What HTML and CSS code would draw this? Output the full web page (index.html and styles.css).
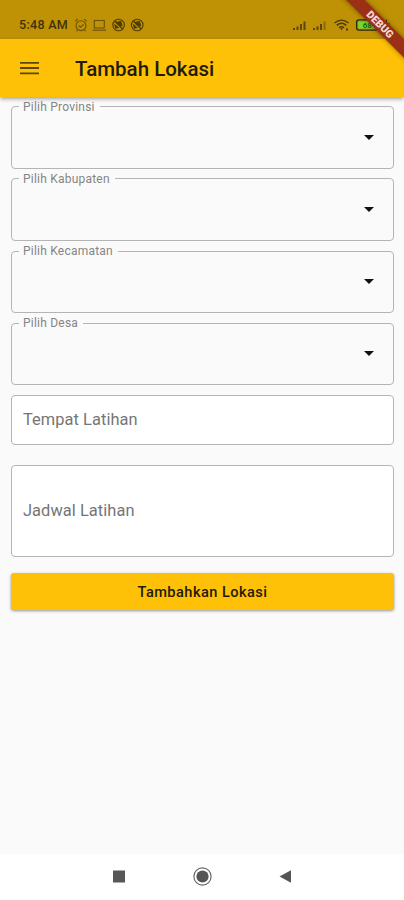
FILE: index.html
```
<!DOCTYPE html>
<html lang="id">
<head>
<meta charset="utf-8">
<title>Tambah Lokasi</title>
<link rel="stylesheet" href="styles.css">
</head>
<body>
<div class="screen">
  <div class="status">
    <span class="time">5:48 AM</span>
    <svg class="left-icons" width="72" height="14" viewBox="0 0 72 14" fill="none" stroke="#6a5205" stroke-width="1.1">
      <circle cx="8" cy="7.7" r="4.9"/><path d="M2.2 3.4L4.8 1.2M13.8 3.4L11.2 1.2M5.8 7.5L7.6 9.3L10.5 6.4M4.5 12L3.4 13M11.5 12L12.6 13"/>
      <rect x="21.3" y="2.5" width="10" height="7.5"/><path d="M19.5 12.2H33.1"/>
      <g id="mute" stroke="#503d05"><circle cx="45.6" cy="7" r="5.8"/><path d="M41.6 3L49.6 11" stroke-width="1.3"/><path d="M43.4 4.2L47.8 3.6L49 7.6L47 7.4ZM42 7L45 9.6L42.6 10Z" fill="#503d05"/></g>
      <use href="#mute" x="18.6"/>
    </svg>
    <svg class="right-icons" width="100" height="14" viewBox="0 0 100 14">
      <g fill="#5c4705"><path d="M1 10h2v2H1zM4.5 8.5h2V12h-2zM8 6h2v6H8zM11.5 3.5h2V12h-2z"/><path d="M21 10h2v2h-2zM24.5 8.5h2V12h-2zM28 6h2v6h-2z"/><path d="M31.5 3.5h2V12h-2z" opacity=".5"/></g>
      <g fill="none" stroke="#4c3a05" stroke-width="1.4"><path d="M42.5 5Q49.5 -.8 56.5 5M44.7 7.4Q49.5 3.2 54.3 7.4M47 9.8Q49.5 7.6 52 9.8"/></g>
      <path d="M48 10.2h3l-1.5 2zM54 10.5h2v2h-2z" fill="#4c3a05"/>
      <rect x="64.6" y="1.8" width="22" height="10.4" rx="2.4" fill="#b98d05" stroke="#2f2c08" stroke-width="1.3"/>
      <rect x="66.3" y="3.5" width="18.6" height="7" rx="1" fill="#6fdc35"/>
      <text x="75.3" y="9.8" class="level">68</text>
      <path d="M95 1L91 7.5H94L92.5 13L98 5.6H95Z" fill="#3c3008"/>
    </svg>
  </div>
  <header class="appbar">
    <svg class="menu" width="20" height="14" viewBox="0 0 20 14" stroke="#5c4805" stroke-width="1.8"><path d="M0 1.8H19M0 7H19M0 12.3H19"/></svg>
    <h1>Tambah Lokasi</h1>
  </header>
  <main class="form">
    <fieldset class="select"><legend>Pilih Provinsi</legend><i class="caret"></i></fieldset>
    <fieldset class="select"><legend>Pilih Kabupaten</legend><i class="caret"></i></fieldset>
    <fieldset class="select"><legend>Pilih Kecamatan</legend><i class="caret"></i></fieldset>
    <fieldset class="select"><legend>Pilih Desa</legend><i class="caret"></i></fieldset>
    <div class="field place">Tempat Latihan</div>
    <div class="field schedule">Jadwal Latihan</div>
    <div class="button">Tambahkan Lokasi</div>
  </main>
  <nav class="navbar">
    <svg width="20" height="20" viewBox="0 0 20 20"><path d="M4 3.5h12v12H4z" fill="#575757"/></svg>
    <svg width="20" height="20" viewBox="0 0 20 20"><circle cx="10.5" cy="9.5" r="8.6" fill="none" stroke="#686868" stroke-width="1.2"/><circle cx="10.5" cy="9.5" r="6.1" fill="#555"/></svg>
    <svg width="20" height="20" viewBox="0 0 20 20"><path d="M3.5 9.5L15 3.3V15.7z" fill="#555"/></svg>
  </nav>
  <div class="banner">DEBUG</div>
</div>
</body>
</html>
```
FILE: styles.css
```
* { box-sizing: border-box; }
body { margin: 0; font-family: Roboto, "Liberation Sans", sans-serif; }
.screen {
  position: relative;
  display: flex;
  flex-direction: column;
  width: 404px;
  height: 900px;
  overflow: hidden;
  background: #fafafa;
}
.status {
  display: flex;
  align-items: center;
  height: 39px;
  padding: 10px 12px 0 19px;
  background: #bf9105;
}
.time { width: 54px; font-size: 12.5px; font-weight: 500; letter-spacing: 0.3px; color: #3f3105; white-space: nowrap; }
.left-icons { flex: none; }
.right-icons { flex: none; margin-left: auto; }
.level { font-size: 8px; font-weight: 700; text-anchor: middle; fill: #256315; }
.appbar {
  display: flex;
  align-items: center;
  flex: none;
  height: 58px;
  padding-left: 20px;
  background: #ffc107;
  box-shadow: 0 2px 4px rgba(0, 0, 0, 0.35);
}
.menu { margin-right: 35px; }
h1 { margin: 0; padding-top: 1px; font-size: 20.5px; font-weight: 500; letter-spacing: 0; color: #211b06; }
.form { display: flex; flex-direction: column; padding: 2.5px 10px 0 11px; }
.select {
  display: flex;
  justify-content: flex-end;
  height: 69px;
  margin: 0 0 3.3px;
  padding: 0 19px 0 7px;
  border: 1px solid #b5b5b5;
  border-radius: 4px;
  min-width: 0;
}
legend { height: 14px; padding: 0 5px 0 4px; font-size: 12px; line-height: 14px; letter-spacing: 0.22px; color: #858585; }
.caret { margin-top: 21px; border: 5px solid transparent; border-top-color: #111; border-bottom: 0; }
.field {
  display: flex;
  align-items: center;
  padding-left: 11px;
  border: 1px solid #b5b5b5;
  border-radius: 4px;
  background: #fff;
  font-size: 16.4px;
  letter-spacing: 0.07px;
  color: #757575;
}
.place { height: 50px; margin-top: 6px; }
.schedule { height: 92px; margin-top: 20px; }
.button {
  display: flex;
  align-items: center;
  justify-content: center;
  height: 37px;
  margin-top: 16.5px;
  border-radius: 3px;
  background: #ffc107;
  box-shadow: 0 1px 3px rgba(0, 0, 0, 0.4);
  font-size: 14.6px;
  font-weight: 500;
  letter-spacing: 0.45px;
  color: #211b06;
}
.navbar {
  display: flex;
  align-items: center;
  justify-content: center;
  gap: 63.5px;
  height: 46px;
  margin-top: auto;
  background: #fff;
}
.banner {
  position: absolute;
  left: 330px;
  top: 18px;
  width: 100px;
  height: 13px;
  transform: rotate(45deg);
  background: #9c3014;
  box-shadow: 0 0 5px rgba(0, 0, 0, 0.45);
  color: #f2dcd8;
  font-size: 10.5px;
  font-weight: 900;
  line-height: 13px;
  text-align: center;
}
```
